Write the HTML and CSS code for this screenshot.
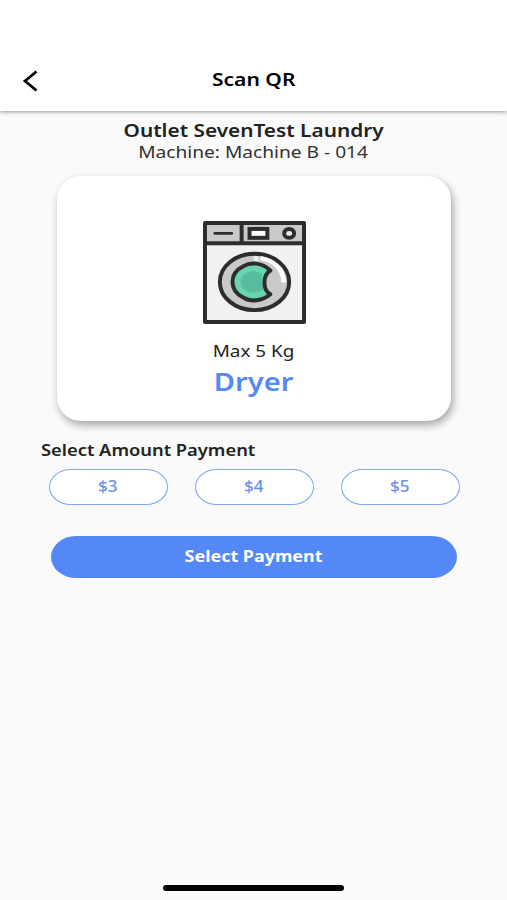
FILE: index.html
```html
<!DOCTYPE html>
<html lang="en">
<head>
<meta charset="utf-8">
<title>Scan QR</title>
<link rel="stylesheet" href="styles.css">
</head>
<body>
<header class="topbar">
  <svg class="back" viewBox="0 0 18 24" width="18" height="24"><path d="M14.500 2.500 3 12l11.500 9.500" fill="none" stroke="#000" stroke-width="2.800"/></svg>
  <h1 class="title"><span>Scan QR</span></h1>
</header>
<main>
  <h2 class="outlet"><span>Outlet SevenTest Laundry</span></h2>
  <p class="machine"><span>Machine: Machine B - 014</span></p>
  <section class="card">
    <svg class="washer" viewBox="0 0 104 104" width="103" height="103">
      <path d="M2 2h100v100H2z" fill="#f1f1f1"/>
      <path d="M2 2h100v20H2z" fill="#c9c9c9"/>
      <g fill="none" stroke="#2d2d2d" stroke-width="4">
        <path d="M2 2h100v100H2zM2 22.500h100M39 2v20" stroke-linejoin="round"/>
        <path d="M12 12.500h17" stroke-width="3" stroke-linecap="round"/>
        <rect x="47" y="8" width="18" height="9" fill="#fafafa"/>
        <ellipse cx="87" cy="12.500" rx="5" ry="4.500" fill="#e8e8e8"/>
        <ellipse cx="52" cy="61.500" rx="35" ry="28.500" fill="#c9c9c9"/>
      </g>
      <path d="M58 37.500C72 39.500 81 49 81.500 62" fill="none" stroke="#fff" stroke-width="4.500"/>
      <path d="M51 35.500h5v5h-5z" fill="#eee"/>
      <path d="M68 50C60 42 48 41 41 45.500 26 53 26 70 41 77.500 48 82 60 81 68 74 60 69 60 55 68 50Z" fill="#68d4b0"/>
      <path d="M60 54C51 47 38 52 38 61.500S51 76 61 69C59 64 59 58 60 54Z" fill="#58bda0"/>
      <path d="M68 50C60 42 48 41 41 45.500 26 53 26 70 41 77.500 48 82 60 81 68 74 60 69 60 55 68 50Z" fill="none" stroke="#2d2d2d" stroke-width="4" stroke-linejoin="round"/>
    </svg>
    <p class="capacity"><span>Max 5 Kg</span></p>
    <p class="kind"><span>Dryer</span></p>
  </section>
  <h3 class="label"><span>Select Amount Payment</span></h3>
  <div class="amounts">
    <button class="amount"><span>$3</span></button>
    <button class="amount"><span>$4</span></button>
    <button class="amount"><span>$5</span></button>
  </div>
  <button class="pay"><span>Select Payment</span></button>
</main>
<footer><div class="home"></div></footer>
</body>
</html>
```
FILE: styles.css
```css
* { box-sizing: border-box; margin: 0; }
body {
  height: 900px;
  display: flex;
  flex-direction: column;
  overflow: hidden;
  background: #fafafa;
  color: #222;
  font-family: "Noto Sans", sans-serif;
}
span { display: inline-block; white-space: nowrap; }
button { font-family: inherit; padding: 0; }
.topbar {
  height: 111px;
  padding: 47px 21px 0 22px;
  display: grid;
  grid-template-columns: 18px 1fr 18px;
  align-items: center;
  background: #fff;
  box-shadow: 0 1px 4px rgba(0, 0, 0, .4);
}
.back { display: block; margin-top: 3px; }
.title { color: #000; font-size: 18px; line-height: 24px; font-weight: 600; text-align: center; }
.title span { transform: scaleX(1.17); }
main { flex: 1; padding-top: 8px; }
.outlet { font-size: 18px; line-height: 22px; font-weight: 600; text-align: center; }
.outlet span { transform: scaleX(1.155); }
.machine { color: #333; font-size: 15.5px; line-height: 22px; text-align: center; }
.machine span { transform: scaleX(1.235); }
.card {
  width: 394px;
  height: 245px;
  margin: 13px 0 0 57px;
  padding-top: 45px;
  border-radius: 24px;
  background: #fff;
  box-shadow: 2px 4px 8px rgba(0, 0, 0, .35);
  text-align: center;
}
.washer { display: block; margin: 0 auto; }
.capacity { font-size: 15.5px; line-height: 20px; margin-top: 17px; }
.capacity span { transform: scaleX(1.22); }
.kind { color: #5588f7; font-size: 26px; line-height: 36px; font-weight: 600; margin-top: 2px; }
.kind span { transform: scaleX(1.12); }
.label { margin: 17px 0 0 41px; font-size: 16.5px; line-height: 24px; font-weight: 600; }
.label span { transform: scaleX(1.11); transform-origin: left; }
.amounts { display: flex; gap: 27px; margin: 7px 0 0 48.5px; }
.amount {
  width: 119px;
  height: 36px;
  padding-bottom: 3px;
  border: 1.5px solid #7da4f5;
  border-radius: 22px / 18px;
  background: #fff;
  color: #6690f0;
  font-size: 15.5px;
  font-weight: 500;
}
.amount span { transform: scaleX(1.1); }
.pay {
  display: block;
  width: 406px;
  height: 42px;
  margin: 31px 0 0 51px;
  padding-bottom: 4px;
  border: 0;
  border-radius: 25px / 21px;
  background: #5588f7;
  color: #fff;
  font-size: 16.5px;
  font-weight: 700;
}
.pay span { transform: scaleX(1.085); }
footer { height: 15px; }
.home { width: 181px; height: 6px; margin-left: 163px; border-radius: 3px; background: #000; }
```
